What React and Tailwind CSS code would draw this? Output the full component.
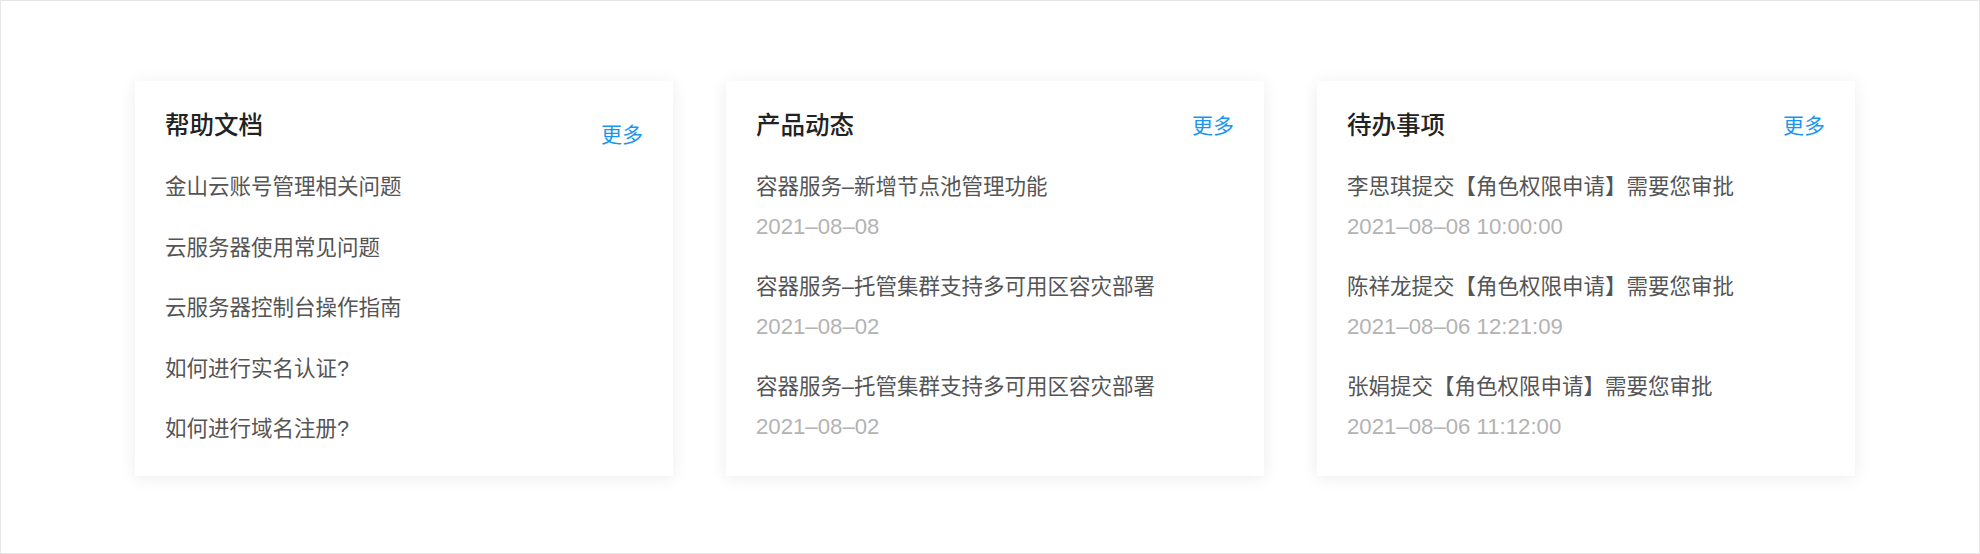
// App.jsx
const docs = [
  "金山云账号管理相关问题",
  "云服务器使用常见问题",
  "云服务器控制台操作指南",
  "如何进行实名认证?",
  "如何进行域名注册?",
];

const news = [
  { title: "容器服务–新增节点池管理功能", date: "2021–08–08" },
  { title: "容器服务–托管集群支持多可用区容灾部署", date: "2021–08–02" },
  { title: "容器服务–托管集群支持多可用区容灾部署", date: "2021–08–02" },
];

const todos = [
  { title: "李思琪提交【角色权限申请】需要您审批", date: "2021–08–08 10:00:00" },
  { title: "陈祥龙提交【角色权限申请】需要您审批", date: "2021–08–06 12:21:09" },
  { title: "张娟提交【角色权限申请】需要您审批", date: "2021–08–06 11:12:00" },
];

function Header({ title, moreOffset }) {
  return (
    <div className="flex justify-between items-start h-[30px]">
      <h2 className="text-[24.5px] leading-[30px] font-medium text-[#222]">{title}</h2>
      <a className={`text-[21px] leading-[30px] text-[#1a96f0] cursor-pointer ${moreOffset ? "mt-[9px]" : ""}`}>更多</a>
    </div>
  );
}

function DatedList({ items }) {
  return (
    <div className="mt-[31px] flex flex-col gap-[30px]">
      {items.map((item, i) => (
        <div key={i}>
          <p className="text-[21.5px] leading-[30px] text-[#555]">{item.title}</p>
          <p className="mt-[10px] text-[22.2px] leading-[30px] text-[#b3b3b3]">{item.date}</p>
        </div>
      ))}
    </div>
  );
}

export default function App() {
  return (
    <div
      className="h-[554px] border border-[#e6e6e6] bg-white pt-[80px] pl-[134px]"
      style={{ fontFamily: '"Liberation Sans", "Noto Sans CJK SC", sans-serif' }}
    >
      <div className="flex gap-[53px]">
        <div className="w-[538px] h-[395px] bg-white shadow-[0_2px_16px_rgba(0,0,0,0.08)] pt-[30px] px-[30px]">
          <Header title="帮助文档" moreOffset />
          <div className="mt-[16px]">
            {docs.map((d, i) => (
              <div key={i} className="h-[60.5px] flex items-center text-[21.5px] text-[#555]">
                {d}
              </div>
            ))}
          </div>
        </div>

        <div className="w-[538px] h-[395px] bg-white shadow-[0_2px_16px_rgba(0,0,0,0.08)] pt-[30px] px-[30px]">
          <Header title="产品动态" />
          <DatedList items={news} />
        </div>

        <div className="w-[538px] h-[395px] bg-white shadow-[0_2px_16px_rgba(0,0,0,0.08)] pt-[30px] px-[30px]">
          <Header title="待办事项" />
          <DatedList items={todos} />
        </div>
      </div>
    </div>
  );
}
